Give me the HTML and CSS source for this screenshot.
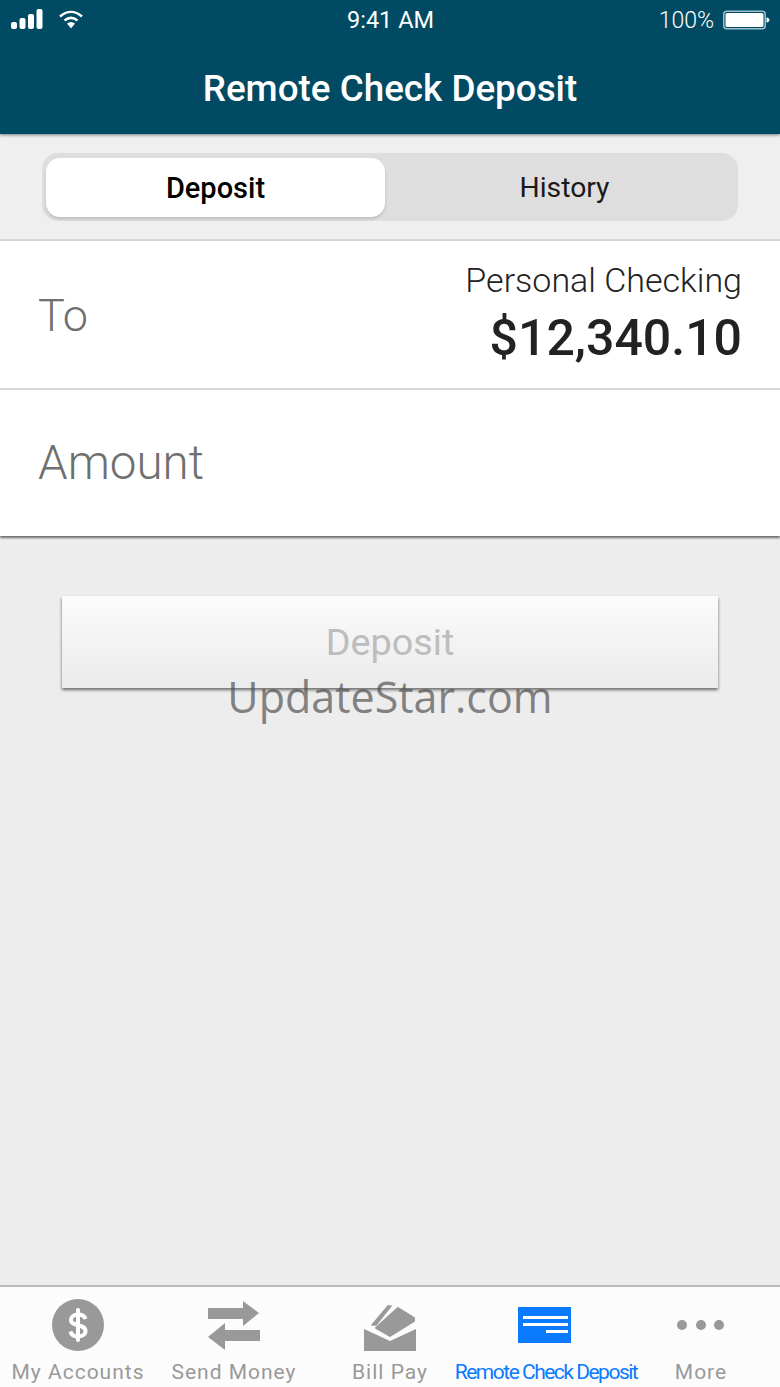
FILE: index.html
```html
<!DOCTYPE html>
<html lang="en">
<head>
    <meta charset="UTF-8">
    <meta name="viewport" content="width=device-width, initial-scale=1.0">
    <title>Remote Check Deposit</title>
    <link rel="stylesheet" href="styles.css">
</head>
<body>

<div class="phone">

    <!-- Header -->
    <header class="app-header">
        <div class="status-bar">
            <div class="status-left">
                <svg class="signal-icon" width="32" height="20" viewBox="0 0 32 20">
                    <rect x="0" y="13" width="6" height="7" rx="2" fill="#fff"/>
                    <rect x="8.500" y="9" width="6" height="11" rx="2" fill="#fff"/>
                    <rect x="17" y="5" width="6" height="15" rx="2" fill="#fff"/>
                    <rect x="25.500" y="0" width="6" height="20" rx="2" fill="#fff"/>
                </svg>
                <svg class="wifi-icon" width="26" height="20" viewBox="0 0 26 20">
                    <path d="M2 7.500C9 1.500 17 1.500 24 7.500" fill="none" stroke="#fff" stroke-width="2.500"/>
                    <path d="M6.500 11.500C10.500 8.300 15.500 8.300 19.500 11.500" fill="none" stroke="#fff" stroke-width="2.500"/>
                    <path d="M9 14.500C11.500 12.500 14.500 12.500 17 14.500L13 19.500Z" fill="#fff"/>
                </svg>
            </div>
            <div class="status-time">9:41 AM</div>
            <div class="status-right">
                <span>100%</span>
                <svg class="battery-icon" width="47" height="20" viewBox="0 0 47 20">
                    <rect x="0.750" y="1.250" width="41.500" height="17.500" rx="3" fill="none" stroke="#9fc0cc" stroke-width="1.500"/>
                    <rect x="2.500" y="3" width="38" height="14" rx="1.500" fill="#fff"/>
                    <path d="M43.500 7.500C45.500 7.800 46.500 8.800 46.500 10C46.500 11.200 45.500 12.200 43.500 12.500Z" fill="#fff"/>
                </svg>
            </div>
        </div>
        <h1 class="app-title">Remote Check Deposit</h1>
    </header>

    <!-- Deposit / History switch -->
    <div class="segment-wrap">
        <div class="segment">
            <div class="segment-item active">Deposit</div>
            <div class="segment-item">History</div>
        </div>
    </div>

    <!-- Form rows -->
    <section class="form-rows">
        <div class="form-row">
            <div class="row-label short">To</div>
            <div class="row-value">
                <div class="account-name">Personal Checking</div>
                <div class="account-balance">$12,340.10</div>
            </div>
        </div>
        <div class="form-row">
            <div class="row-label">Amount</div>
        </div>
    </section>

    <!-- Deposit button -->
    <main class="content">
        <button class="deposit-btn" type="button">Deposit</button>
        <div class="watermark">UpdateStar.com</div>
    </main>

    <!-- Tab bar -->
    <nav class="tab-bar">
        <div class="tab">
            <svg class="tab-icon" width="56" height="56" viewBox="0 0 56 56">
                <circle cx="28" cy="27" r="26" fill="#999"/>
                <path d="M35.500 21C34.500 18 31.500 16.500 28 16.500C24 16.500 21 18.800 21 22C21 29 35.500 25.500 35.500 33C35.500 36.500 32 38.500 28 38.500C24 38.500 21.300 36.500 20.300 33.500" fill="none" stroke="#fff" stroke-width="4"/>
                <path d="M28 12V42" stroke="#fff" stroke-width="4" stroke-linecap="round"/>
            </svg>
            <span>My Accounts</span>
        </div>
        <div class="tab">
            <svg class="tab-icon" width="56" height="56" viewBox="0 0 56 56">
                <path d="M2 10H37V3L53 15L37 28V21H2Z" fill="#999"/>
                <path d="M54 32H19V25L2 39L19 52V43H54Z" fill="#999"/>
            </svg>
            <span>Send Money</span>
        </div>
        <div class="tab">
            <svg class="tab-icon" width="56" height="56" viewBox="0 0 56 56">
                <path d="M2 31L28 43L54 31V53H2Z" fill="#999"/>
                <path d="M10 27L26 8H29L14 27Z" fill="#999" stroke="#999" stroke-width="1.500" stroke-linejoin="round"/>
                <path d="M14 30L36 10L52 20V23L28 38Z" fill="#999" stroke="#999" stroke-width="2" stroke-linejoin="round"/>
            </svg>
            <span>Bill Pay</span>
        </div>
        <div class="tab active">
            <svg class="tab-icon" width="56" height="56" viewBox="0 0 56 56">
                <rect x="0" y="9" width="53" height="36" fill="#0a7aff"/>
                <rect x="5" y="18" width="45" height="3" fill="#fff"/>
                <rect x="5" y="25" width="45" height="3" fill="#fff"/>
                <rect x="28" y="32" width="22" height="3" fill="#fff"/>
            </svg>
            <span>Remote Check Deposit</span>
        </div>
        <div class="tab">
            <svg class="tab-icon" width="56" height="56" viewBox="0 0 56 56">
                <circle cx="8" cy="27" r="5" fill="#999"/>
                <circle cx="27" cy="27" r="5" fill="#999"/>
                <circle cx="45" cy="27" r="5" fill="#999"/>
            </svg>
            <span class="tab-more">More</span>
        </div>
    </nav>

</div>

</body>
</html>
```

FILE: styles.css
```css
* {
    box-sizing: border-box;
}
body {
    margin: 0;
    background-color: #ededed;
    font-family: Roboto, "Liberation Sans", sans-serif;
}
.phone {
    width: 780px;
    height: 1387px;
    display: flex;
    flex-direction: column;
    overflow: hidden;
}
.app-header {
    height: 134px;
    background-color: #004a63;
    color: #fff;
    box-shadow: 0 1px 3px rgba(0, 0, 0, 0.5);
    position: relative;
    flex-shrink: 0;
}
.status-bar {
    height: 40px;
    display: grid;
    grid-template-columns: 1fr auto 1fr;
    align-items: center;
    padding: 0 10px 0 11px;
    font-size: 23px;
    font-weight: 300;
}
.status-time {
    font-size: 23.5px;
    font-weight: 400;
}
.status-left {
    display: flex;
    align-items: center;
    gap: 15px;
}
.status-right {
    display: flex;
    justify-content: flex-end;
    align-items: center;
    gap: 9px;
}
.signal-icon {
    margin-top: -2px;
}
.wifi-icon {
    margin-top: -3px;
}
.app-title {
    margin: 0;
    padding-top: 26px;
    text-align: center;
    font-size: 36.800px;
    line-height: 46px;
    font-weight: 500;
}
.segment-wrap {
    height: 107px;
    padding: 19px 42px 0;
    border-bottom: 2px solid #d6d6d6;
    background-color: #efefef;
    flex-shrink: 0;
}
.segment {
    height: 68px;
    padding: 5px 0 4px 4px;
    display: flex;
    border-radius: 16px;
    background-color: #dedede;
}
.segment-item {
    flex: 1;
    padding-left: 2px;
    display: flex;
    align-items: center;
    justify-content: center;
    font-size: 28.300px;
    color: #1a1a1a;
}
.segment-item.active {
    flex: 0 0 339px;
    padding-left: 0;
    margin-right: 4px;
    border-radius: 14px;
    background-color: #fff;
    font-size: 29px;
    font-weight: 500;
    color: #000;
    box-shadow: 0 2px 3px rgba(0, 0, 0, 0.15);
}
.form-rows {
    background-color: #fff;
    box-shadow: 0 2px 2px rgba(0, 0, 0, 0.55);
    flex-shrink: 0;
    position: relative;
}
.form-row {
    height: 149px;
    padding: 0 38px;
    display: flex;
    justify-content: space-between;
    align-items: center;
    border-bottom: 2px solid #d9d9d9;
}
.form-row:last-child {
    height: 146px;
    border-bottom: none;
}
.row-label {
    font-size: 47.500px;
    font-weight: 300;
    color: #6f6f6f;
}
.row-label.short {
    font-size: 45px;
    line-height: 52px;
    padding-top: 3px;
    box-sizing: content-box;
}
.row-value {
    padding-top: 6px;
    text-align: right;
}
.account-name {
    font-size: 34px;
    line-height: 40px;
    margin-top: -4px;
    font-weight: 300;
    color: #222;
}
.account-balance {
    margin-top: 4px;
    font-size: 50px;
    line-height: 68px;
    font-weight: 500;
    color: #222;
}
.content {
    flex: 1;
    padding: 60px 62px 0;
    position: relative;
}
.deposit-btn {
    display: block;
    width: 100%;
    height: 92px;
    border: none;
    padding: 0;
    background: linear-gradient(#fbfbfb, #ebebeb);
    box-shadow: 0 2px 3px rgba(0, 0, 0, 0.55);
    font-family: inherit;
    font-size: 37.800px;
    color: #bdbdbd;
}
/* sits over the bottom edge of the button */
.watermark {
    position: absolute;
    left: 0;
    right: 0;
    top: 133px;
    text-align: center;
    font-family: "Open Sans", sans-serif;
    font-size: 43px;
    line-height: 56px;
    color: rgba(80, 80, 80, 0.7);
}
.tab-bar {
    height: 102px;
    display: flex;
    border-top: 2px solid #bcbcbc;
    background-color: #fcfcfc;
    flex-shrink: 0;
}
.tab {
    width: 156px;
    display: flex;
    flex-direction: column;
    align-items: center;
    padding-top: 11px;
    font-size: 21px;
    letter-spacing: 1px;
    color: #999;
}
.tab span {
    white-space: nowrap;
    margin-top: 6px;
}
.tab span.tab-more {
    margin-right: 2px;
}
.tab.active {
    color: #0a7aff;
}
.tab.active span {
    letter-spacing: -1.500px;
}
```
